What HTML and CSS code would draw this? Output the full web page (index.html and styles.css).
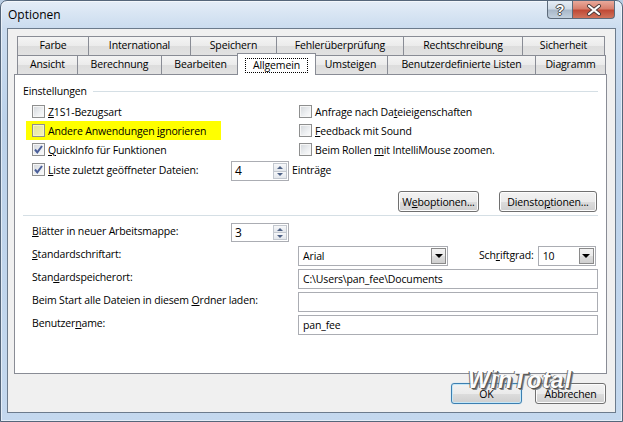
FILE: index.html
```html
<!DOCTYPE html>
<html>
<head lang="de">
    <meta charset="UTF-8">
    <title>Optionen</title>
    <link rel="stylesheet" href="styles.css">
</head>
<body>
<div class="window">
    <div class="titlebar">
        <span class="title">Optionen</span>
        <div class="caption">
            <span class="cap-help">?</span>
            <span class="cap-close">
                <svg width="16" height="12" viewBox="0 0 16 12">
                    <path d="M3 2 L13 10 M13 2 L3 10" stroke="#4a3a3a" stroke-width="4" stroke-linecap="round"/>
                    <path d="M3 2 L13 10 M13 2 L3 10" stroke="#fff" stroke-width="2.2" stroke-linecap="round"/>
                </svg>
            </span>
        </div>
    </div>
    <div class="client">
        <div class="tabs">
            <div class="tabrow">
                <span class="tab" style="width:72px">Farbe</span>
                <span class="tab" style="width:103px">International</span>
                <span class="tab" style="width:87px">Speichern</span>
                <span class="tab" style="width:128px">Fehlerüberprüfung</span>
                <span class="tab" style="width:120px">Rechtschreibung</span>
                <span class="tab" style="width:83px">Sicherheit</span>
            </div>
            <div class="tabrow">
                <span class="tab" style="width:61px">Ansicht</span>
                <span class="tab" style="width:85px">Berechnung</span>
                <span class="tab" style="width:79px">Bearbeiten</span>
                <span class="tab active" style="width:79px"><span class="focus">Allgemein</span></span>
                <span class="tab" style="width:75px">Umsteigen</span>
                <span class="tab" style="width:149px">Benutzerdefinierte Listen</span>
                <span class="tab" style="width:71px">Diagramm</span>
            </div>
        </div>
        <div class="panel">
            <div class="group-head">
                <span>Einstellungen</span>
                <span class="rule"></span>
            </div>
            <div class="opts">
                <div class="chk"><span class="box"></span><span><u>Z</u>1S1-Bezugsart</span></div>
                <div class="chk"><span class="box"></span><span>Anfrage nach Da<u>t</u>eieigenschaften</span></div>
                <div class="chk mark"><span class="box"></span><span>Andere Anwendungen <u>i</u>gnorieren</span></div>
                <div class="chk"><span class="box"></span><span><u>F</u>eedback mit Sound</span></div>
                <div class="chk"><span class="box on"><svg width="11" height="11" viewBox="0 0 11 11"><path d="M2 5.5 L4.3 8.3 L9 2" fill="none" stroke="#4b5f9a" stroke-width="2"/></svg></span><span><u>Q</u>uickInfo für Funktionen</span></div>
                <div class="chk"><span class="box"></span><span>Beim Rollen <u>m</u>it IntelliMouse zoomen.</span></div>
            </div>
            <div class="recent">
                <div class="chk wide"><span class="box on"><svg width="11" height="11" viewBox="0 0 11 11"><path d="M2 5.5 L4.3 8.3 L9 2" fill="none" stroke="#4b5f9a" stroke-width="2"/></svg></span><span><u>L</u>iste zuletzt geöffneter Dateien:</span></div>
                <div class="spin">
                    <span class="spin-val">4</span>
                    <span class="spin-btns">
                        <span class="spin-up"></span>
                        <span class="spin-down"></span>
                    </span>
                </div>
                <span class="after">Einträ<u>g</u>e</span>
            </div>
            <div class="btn-row">
                <span class="btn web">W<u>e</u>boptionen...</span>
                <span class="btn dienst">Diensto<u>p</u>tionen...</span>
            </div>
            <div class="sep"></div>
            <div class="fields">
                <div class="frow first">
                    <span class="lbl"><u>B</u>lätter in neuer Arbeitsmappe:</span>
                    <div class="spin small">
                        <span class="spin-val">3</span>
                        <span class="spin-btns">
                            <span class="spin-up"></span>
                            <span class="spin-down"></span>
                        </span>
                    </div>
                </div>
                <div class="frow">
                    <span class="lbl"><u>S</u>tandardschriftart:</span>
                    <div class="combo font">
                        <span class="combo-val">Arial</span>
                        <span class="drop"></span>
                    </div>
                    <span class="size-lbl">Sch<u>r</u>iftgrad:</span>
                    <div class="combo size">
                        <span class="combo-val">10</span>
                        <span class="drop"></span>
                    </div>
                </div>
                <div class="frow">
                    <span class="lbl">Stan<u>d</u>ardspeicherort:</span>
                    <span class="edit">C:\Users\pan_fee\Documents</span>
                </div>
                <div class="frow">
                    <span class="lbl">Beim Start alle Dateien in diesem <u>O</u>rdner laden:</span>
                    <span class="edit"></span>
                </div>
                <div class="frow">
                    <span class="lbl">Benutzer<u>n</u>ame:</span>
                    <span class="edit">pan_fee</span>
                </div>
            </div>
        </div>
        <div class="footer">
            <span class="btn ok">OK</span>
            <span class="btn">Abbrechen</span>
        </div>
        <div class="watermark">WinTotal</div>
    </div>
</div>
</body>
</html>
```

FILE: styles.css
```css
* {
    margin: 0;
    padding: 0;
    box-sizing: border-box;
}
body {
    width: 623px;
    height: 422px;
    font-family: "Open Sans", "Noto Sans", sans-serif;
    font-size: 10.5px;
    letter-spacing: -0.15px;
    color: #000;
    background: #b9cde3;
    overflow: hidden;
}
u {
    text-decoration: underline;
    text-underline-offset: 1px;
}

/* fenster */
.window {
    width: 623px;
    height: 422px;
    padding: 0 6px 8px 6px;
    border: 1px solid #55667a;
    border-radius: 7px 7px 0 0;
    background: linear-gradient(180deg, #e4edf7 0, #cbdcef 27px, #bcd2ea 120px, #c4d8ee 100%);
    box-shadow: inset 0 0 0 1px rgba(255, 255, 255, 0.55);
}
.titlebar {
    height: 27px;
    display: flex;
    justify-content: space-between;
    align-items: flex-start;
}
.title {
    padding-left: 1px;
    line-height: 28px;
    font-size: 12px;
    letter-spacing: 0;
    color: #000;
}
.caption {
    display: flex;
    margin-right: 1px;
}
.cap-help, .cap-close {
    height: 18px;
    display: flex;
    align-items: center;
    justify-content: center;
    border: 1px solid #5d6b7b;
    border-top: none;
}
.cap-help {
    width: 25px;
    border-right: none;
    border-radius: 0 0 0 4px;
    background: linear-gradient(180deg, #e6edf5 0, #d0dbe7 45%, #a9b8c9 55%, #c2d0de 100%);
    color: #fff;
    font-family: "Liberation Sans", sans-serif;
    font-weight: bold;
    font-size: 14px;
    text-shadow: 0 0 1px #333, 1px 0 0 #555, -1px 0 0 #555, 0 1px 0 #555, 0 -1px 0 #555;
}
.cap-close {
    width: 43px;
    border-radius: 0 0 4px 0;
    background: linear-gradient(180deg, #e9a99b 0, #d8806e 45%, #c04a36 55%, #d0735c 100%);
}

.client {
    position: relative;
    height: 385px;
    border: 1px solid #6c7b8c;
    background: #f0f0f0;
    padding: 7px 8px 8px 6px;
}

/* reiter */
.tabs {
    padding-left: 3px;
}
.tabrow {
    height: 19px;
    display: flex;
    align-items: flex-end;
}
.tab {
    height: 19px;
    margin-right: -1px;
    border: 1px solid #898c95;
    border-bottom: none;
    background: linear-gradient(180deg, #f4f4f4 0, #ebebeb 50%, #dddddd 51%, #e2e2e2 100%);
    text-align: center;
    line-height: 17px;
    white-space: nowrap;
}
.tab.active {
    position: relative;
    z-index: 1;
    height: 22px;
    margin: 0 -3px -1px -2px;
    background: #fff;
    padding-top: 3px;
}
.focus {
    display: inline-block;
    border: 1px dotted #000;
    padding: 0 7px;
    line-height: 13px;
}
.panel {
    height: 300px;
    border: 1px solid #898c95;
    background: #fff;
    padding: 8px 8px 0 8px;
}

/* einstellungen */
.group-head {
    height: 16px;
    display: flex;
    align-items: center;
}
.rule {
    flex: 1;
    height: 1px;
    margin-left: 6px;
    background: #d5dfe5;
}
.opts {
    margin-top: 3px;
    padding-left: 9px;
    display: grid;
    grid-template-columns: 267px 1fr;
    grid-auto-rows: 19px;
}
.chk {
    display: flex;
    align-items: center;
    gap: 3px;
    white-space: nowrap;
}
.chk.mark {
    margin-left: -6px;
    padding-left: 6px;
    width: 195px;
    background: #ffff00;
}
.box {
    width: 13px;
    height: 13px;
    flex: none;
    display: flex;
    align-items: center;
    justify-content: center;
    border: 1px solid #8e8f8f;
    background: linear-gradient(135deg, #d2d6da 0, #eef0f2 60%, #fcfcfc 100%);
    box-shadow: inset 0 0 0 1px #f6f6f6;
}
.chk.mark .box {
    background: linear-gradient(135deg, #e2e2a0 0, #f2f2b8 100%);
    box-shadow: inset 0 0 0 1px #f4f4c8;
}
.recent {
    margin-top: 2px;
    padding-left: 9px;
    height: 20px;
    display: flex;
    align-items: center;
}
.chk.wide {
    width: 199px;
    margin-top: -3px;
}
.after {
    margin-left: 3px;
    margin-top: -3px;
}
.spin {
    width: 58px;
    height: 20px;
    display: flex;
    justify-content: space-between;
    border: 1px solid #abadb3;
    background: #fff;
    padding: 1px;
}
.spin.small {
    height: 19px;
}
.spin-val {
    padding-left: 2px;
    font-size: 12px;
    line-height: 16px;
}
.spin-btns {
    width: 14px;
    display: flex;
    flex-direction: column;
}
.spin-up, .spin-down {
    flex: 1;
    display: flex;
    align-items: center;
    justify-content: center;
    border: 1px solid #c3c8cf;
    background: linear-gradient(180deg, #f7f8fa 0, #e3e7ec 100%);
}
.spin-down {
    border-top: none;
}
.spin-up::before, .spin-down::before {
    content: "";
    border-left: 3px solid transparent;
    border-right: 3px solid transparent;
}
.spin-up::before {
    border-bottom: 3px solid #4d6185;
}
.spin-down::before {
    border-top: 3px solid #4d6185;
}

/* knoepfe */
.btn-row {
    margin-top: 10px;
    padding-right: 1px;
    display: flex;
    justify-content: flex-end;
    gap: 20px;
}
.btn {
    height: 21px;
    display: flex;
    align-items: center;
    justify-content: center;
    border: 1px solid #707070;
    border-radius: 3px;
    background: linear-gradient(180deg, #f2f2f2 0, #ebebeb 50%, #dddddd 51%, #cfcfcf 100%);
    box-shadow: inset 0 0 0 1px #fcfcfc;
    white-space: nowrap;
}
.btn.web {
    width: 81px;
}
.btn.dienst {
    width: 98px;
}
.sep {
    margin-top: 3px;
    height: 1px;
    background: #d5dfe5;
}
.fields {
    margin-top: 7px;
    padding-left: 9px;
    display: flex;
    flex-direction: column;
    gap: 3px;
}
.frow {
    height: 20px;
    display: flex;
    align-items: flex-start;
}
.frow.first {
    height: 19px;
    margin-bottom: 1px;
}
.lbl {
    width: 266px;
    flex: none;
    line-height: 16px;
    white-space: nowrap;
}
.frow.first .lbl {
    width: 199px;
}
.edit, .combo {
    height: 20px;
    border: 1px solid #abadb3;
    background: #fff;
    padding-left: 4px;
    line-height: 18px;
    white-space: nowrap;
}
.edit {
    flex: 1;
}
.combo {
    display: flex;
    justify-content: space-between;
    padding: 1px 1px 1px 4px;
}
.combo-val {
    line-height: 16px;
}
.combo.font {
    width: 150px;
}
.combo.size {
    width: 58px;
}
.size-lbl {
    margin-left: 31px;
    margin-right: 4px;
    line-height: 18px;
}
.drop {
    width: 15px;
    display: flex;
    align-items: center;
    justify-content: center;
    border: 1px solid #8a8a8a;
    background: linear-gradient(180deg, #f2f2f2 0, #ebebeb 50%, #dddddd 51%, #cfcfcf 100%);
}
.drop::before {
    content: "";
    border-left: 4px solid transparent;
    border-right: 4px solid transparent;
    border-top: 4px solid #000;
}
.footer {
    margin-top: 9px;
    display: flex;
    justify-content: flex-end;
    gap: 13px;
    padding-right: 1px;
}
.footer .btn {
    width: 71px;
}
.btn.ok {
    border-color: #3c7fb1;
    box-shadow: inset 0 0 0 1px #c5e7f7, 0 0 1px #88c8f0;
}
.watermark {
    position: absolute;
    left: 460px;
    top: 338px;
    font-family: "Liberation Sans", sans-serif;
    font-weight: bold;
    font-style: italic;
    font-size: 23px;
    letter-spacing: 1px;
    color: #fff;
    opacity: 0.9;
    text-shadow: 1px 1px 0 #444, 2px 2px 0 #777, -1px 0 0 #666;
}
```
